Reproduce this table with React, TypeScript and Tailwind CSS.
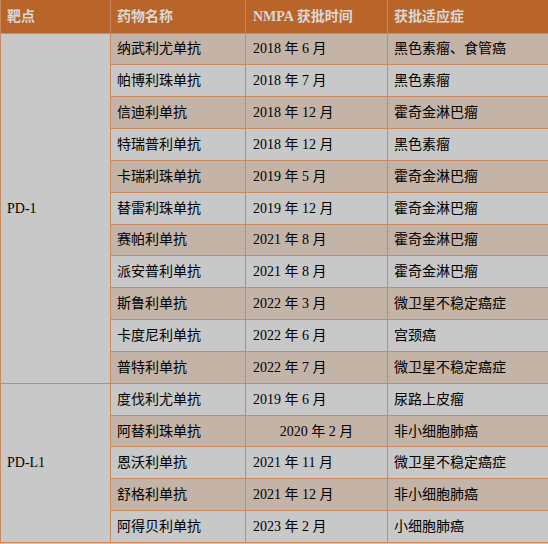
const rows = [
  { name: "纳武利尤单抗", date: "2018 年 6 月", use: "黑色素瘤、食管癌" },
  { name: "帕博利珠单抗", date: "2018 年 7 月", use: "黑色素瘤" },
  { name: "信迪利单抗", date: "2018 年 12 月", use: "霍奇金淋巴瘤" },
  { name: "特瑞普利单抗", date: "2018 年 12 月", use: "黑色素瘤" },
  { name: "卡瑞利珠单抗", date: "2019 年 5 月", use: "霍奇金淋巴瘤" },
  { name: "替雷利珠单抗", date: "2019 年 12 月", use: "霍奇金淋巴瘤" },
  { name: "赛帕利单抗", date: "2021 年 8 月", use: "霍奇金淋巴瘤" },
  { name: "派安普利单抗", date: "2021 年 8 月", use: "霍奇金淋巴瘤" },
  { name: "斯鲁利单抗", date: "2022 年 3 月", use: "微卫星不稳定癌症" },
  { name: "卡度尼利单抗", date: "2022 年 6 月", use: "宫颈癌" },
  { name: "普特利单抗", date: "2022 年 7 月", use: "微卫星不稳定癌症" },
  { name: "度伐利尤单抗", date: "2019 年 6 月", use: "尿路上皮瘤" },
  { name: "阿替利珠单抗", date: "2020 年 2 月", use: "非小细胞肺癌", center: true },
  { name: "恩沃利单抗", date: "2021 年 11 月", use: "微卫星不稳定癌症" },
  { name: "舒格利单抗", date: "2021 年 12 月", use: "非小细胞肺癌" },
  { name: "阿得贝利单抗", date: "2023 年 2 月", use: "小细胞肺癌" },
];

const cell = "border border-[#c98a62] px-[6px] align-middle";

export default function App() {
  return (
    <div
      className="w-[548px] h-[544px] overflow-hidden bg-[#c8c8c8] text-[14px] text-black"
      style={{ fontFamily: '"Liberation Serif", "Noto Sans CJK SC", serif' }}
    >
      <table className="w-[548px] table-fixed border-collapse">
        <colgroup>
          <col className="w-[110px]" />
          <col className="w-[135px]" />
          <col className="w-[142px]" />
          <col className="w-[161px]" />
        </colgroup>
        <thead>
          <tr className="h-[33px] bg-[#b96428] text-[#d8d8d8] font-bold text-left">
            <th className="border-x border-[#c9875c] px-[6px] font-bold">靶点</th>
            <th className="border-x border-[#c9875c] px-[6px] font-bold">药物名称</th>
            <th className="border-x border-[#c9875c] px-[7px] font-bold">NMPA 获批时间</th>
            <th className="border-x border-[#c9875c] px-[6px] font-bold">获批适应症</th>
          </tr>
        </thead>
        <tbody>
          {rows.map((r, i) => (
            <tr key={r.name} className={i % 2 === 0 ? "h-[31.85px] bg-[#c4b3a7]" : "h-[31.85px] bg-[#c8c8c8]"}>
              {i === 0 && (
                <td rowSpan={11} className={`${cell} bg-[#c8c8c8]`}>
                  PD-1
                </td>
              )}
              {i === 11 && (
                <td rowSpan={5} className={`${cell} bg-[#c8c8c8]`}>
                  PD-L1
                </td>
              )}
              <td className={cell}>{r.name}</td>
              <td className={r.center ? `${cell} text-center` : `${cell} pl-[7px]`}>{r.date}</td>
              <td className={cell}>{r.use}</td>
            </tr>
          ))}
        </tbody>
      </table>
    </div>
  );
}
